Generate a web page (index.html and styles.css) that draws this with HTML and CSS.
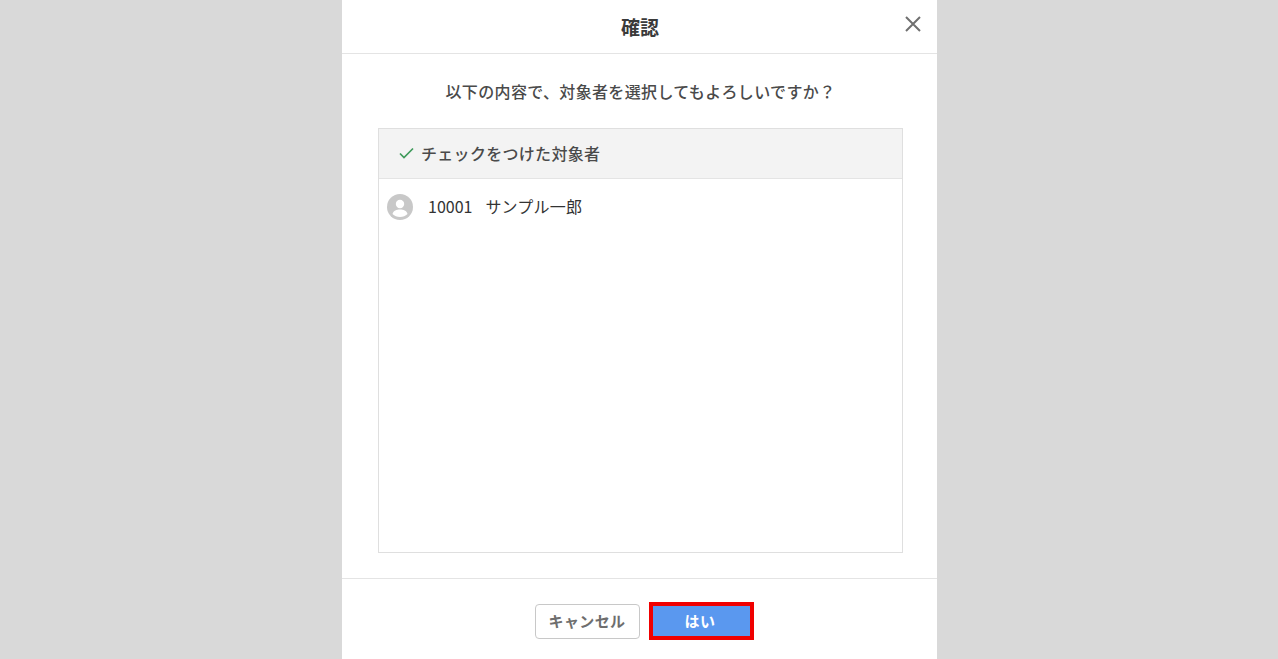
FILE: index.html
```html
<!DOCTYPE html>
<html lang="ja">
<head>
  <meta charset="UTF-8">
  <title>確認</title>
  <link rel="stylesheet" href="styles.css">
</head>
<body>
  <div class="dialog">
    <div class="dialog-header">
      <h1 class="dialog-title">確認</h1>
      <button class="close-button" aria-label="閉じる">
        <svg width="16" height="16" viewBox="0 0 16 16"><path d="M1 1L15 15M15 1L1 15" stroke="#707070" stroke-width="2" fill="none"/></svg>
      </button>
    </div>

    <div class="dialog-body">
      <p class="message">以下の内容で、対象者を選択してもよろしいですか？</p>
      <div class="target-box">
        <div class="target-head">
          <svg width="15" height="12" viewBox="0 0 15 12"><path d="M1 6.5L5 10.5L14 1.5" stroke="#3f9a5b" stroke-width="1.7" fill="none"/></svg>
          <span>チェックをつけた対象者</span>
        </div>
        <div class="target-row">
          <svg class="avatar" width="26" height="26" viewBox="0 0 26 26">
            <circle cx="13" cy="13" r="13" fill="#c8c8c8"/>
            <circle cx="13" cy="10" r="4.2" fill="#fff"/>
            <path d="M5.5 20C6.5 16.6 9.5 15.6 13 15.6C16.5 15.6 19.5 16.6 20.5 20C18.6 22 16 23 13 23C10 23 7.4 22 5.5 20Z" fill="#fff"/>
          </svg>
          <span class="target-id">10001</span>
          <span class="target-name">サンプル一郎</span>
        </div>
      </div>
    </div>

    <div class="dialog-footer">
      <button class="btn btn-cancel">キャンセル</button>
      <button class="btn btn-ok">はい</button>
    </div>
  </div>
</body>
</html>
```

FILE: styles.css
```css
* {
  box-sizing: border-box;
}

html, body {
  height: 100%;
}

body {
  margin: 0;
  background: #d9d9d9;
  color: #4a4a4a;
  font-family: "Noto Sans CJK JP", "Noto Sans", sans-serif;
  overflow: hidden;
}

.dialog {
  display: flex;
  flex-direction: column;
  width: 595px;
  height: 659px;
  margin-left: 342px;
  background: #fff;
}

.dialog-header {
  position: relative;
  display: flex;
  align-items: center;
  justify-content: center;
  height: 54px;
  padding-left: 1px;
  border-bottom: 1px solid #e4e4e4;
}

.dialog-title {
  margin: 0;
  font-size: 19px;
  font-weight: 700;
  color: #3a3a3a;
}

.close-button {
  position: absolute;
  top: 16px;
  right: 16px;
  width: 16px;
  height: 16px;
  padding: 0;
  border: none;
  background: none;
  line-height: 0;
}

.dialog-body {
  flex: 1;
  padding: 0 34px 25px 36px;
  display: flex;
  flex-direction: column;
}

.message {
  margin: 25px 0 25px;
  font-size: 16px;
  font-weight: 500;
  line-height: 24px;
  text-align: center;
  letter-spacing: 0.35px;
}

.target-box {
  flex: 1;
  border: 1px solid #dfdfdf;
}

.target-head {
  display: flex;
  align-items: center;
  gap: 7px;
  height: 50px;
  padding-left: 20px;
  padding-bottom: 2px;
  background: #f3f3f3;
  border-bottom: 1px solid #e4e4e4;
  font-size: 16px;
  font-weight: 500;
  letter-spacing: 0.3px;
}

.target-row {
  display: flex;
  align-items: center;
  height: 56px;
  padding-left: 8px;
  font-size: 16px;
  color: #333;
}

.avatar {
  margin-right: 15px;
}

.target-id {
  margin-right: 13px;
  margin-top: -2px;
}

.target-name {
  margin-top: -2px;
  letter-spacing: 0.2px;
}

.dialog-footer {
  display: flex;
  justify-content: center;
  align-items: center;
  gap: 9px;
  height: 81px;
  padding-left: 9px;
  padding-top: 4px;
  border-top: 1px solid #e4e4e4;
}

.btn {
  height: 35px;
  padding: 0 0 2px;
  font-family: inherit;
  font-size: 15px;
  font-weight: 700;
  letter-spacing: 0.4px;
}

.btn-cancel {
  width: 105px;
  background: #fff;
  border: 1.5px solid #c8c8c8;
  border-radius: 4px;
  color: #6e6e6e;
}

.btn-ok {
  width: 105px;
  height: 38px;
  padding-right: 2px;
  background: #5a98ef;
  border: 4px solid #f00000;
  color: #fff;
}
```
